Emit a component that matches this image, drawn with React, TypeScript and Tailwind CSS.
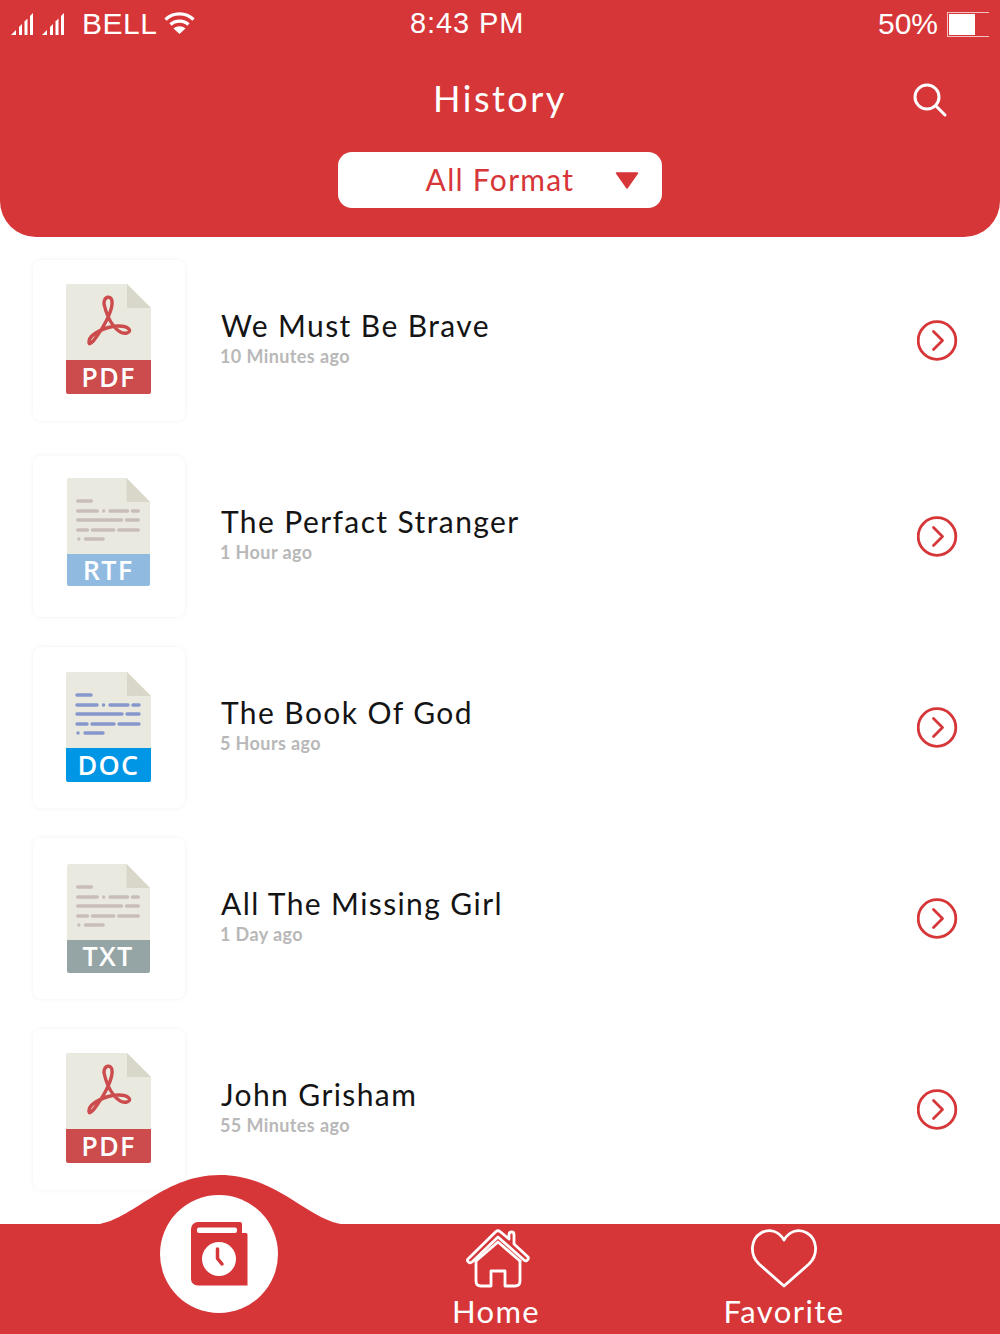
import React from "react";

const RED = "#d63638";

function DocIcon({ label, band, kind, lineColor, wide, lift, bandH }: { label: string; band: string; kind: "pdf" | "text"; lineColor?: string; wide?: boolean; lift: string; bandH: string }) {
  return (
    <div className={`flex flex-col ${wide ? "w-[85px] mr-[1px]" : "w-[83px] mr-[2px]"} ${lift}`}>
      <svg viewBox="0 0 85 76" className="block w-full" preserveAspectRatio="none" style={{ height: 76 }}>
        <path d="M2 0H61L85 24V76H0V2a2 2 0 0 1 2-2z" fill="#e9e9e0" />
        <path d="M61 0L85 24H61z" fill="#d9d7ca" />
        {kind === "pdf" ? (
          <path
            d="M38 20C38 12 45 11 46 17C47 24 41 38 31 52C27 58 22 63 23 57C24 50 40 42 53 42C62 42 67 47 61 49C52 51 42 38 38 20z"
            fill="none"
            stroke="#cc4b4c"
            strokeWidth="3.4"
            strokeLinejoin="round"
          />
        ) : (
          <g stroke={lineColor} strokeWidth="3.4" strokeLinecap="round" fill="none">
            <path d="M11 23H25" />
            <path d="M11 33H31M37.500 33H37.600M44 33H62M67 33H73" />
            <path d="M11 42H56M61 42H73" />
            <path d="M11 52H21M26 52H48M53 52H73" />
            <path d="M12 61H12.100M19 61H37" />
          </g>
        )}
      </svg>
      <div
        className={`flex items-center justify-center rounded-b-[2px] pt-[1px] text-[27px] font-semibold tracking-[1.2px] text-white ${bandH}`}
        style={{ backgroundColor: band, fontFamily: '"Open Sans", sans-serif' }}
      >
        {label}
      </div>
    </div>
  );
}

function Row({ title, sub, gap, doc }: { title: string; sub: string; gap: string; doc: React.ReactNode }) {
  return (
    <div className={`flex h-[161px] items-center pl-[33px] pr-[42px] ${gap}`}>
      <div className="flex h-[161px] w-[152px] shrink-0 items-center justify-center rounded-[8px] bg-white shadow-[0_0_5px_rgba(0,0,0,0.06)]">
        {doc}
      </div>
      <div className="ml-[36px] flex-1 pb-[6px]">
        <div className="text-[30px] leading-[34px] tracking-[1.4px] text-[#141414]">{title}</div>
        <div className="ml-[-1px] mt-[2px] text-[18px] font-bold leading-[24px] tracking-[0.4px] text-[#b8b8b8]">{sub}</div>
      </div>
      <svg width="41" height="41" viewBox="0 0 41 41" fill="none" stroke={RED} strokeWidth="2.800" strokeLinecap="round" strokeLinejoin="round">
        <circle cx="20" cy="20.500" r="18.800" />
        <path d="M16.500 11.500L25.500 20.500L16.500 29.500" />
      </svg>
    </div>
  );
}

function Signal() {
  return (
    <svg width="22" height="22" viewBox="0 0 22 22" fill="#fff">
      <path d="M0 22L5 17V22z" />
      <path d="M8 14L11 11V22H8z" />
      <path d="M13.500 8.500L16.500 5.500V22H13.500z" />
      <path d="M19 3L22 0V22H19z" />
    </svg>
  );
}

export default function App() {
  return (
    <div className="relative flex h-[1334px] w-[1000px] flex-col overflow-hidden bg-white" style={{ fontFamily: 'Lato, sans-serif' }}>
      <header className="h-[237px] shrink-0 rounded-b-[36px] bg-[#d63638] text-white">
        <div className="flex h-[48px] items-center px-[11px]" style={{ fontFamily: '"Liberation Sans", sans-serif' }}>
          <div className="flex w-[320px] items-center">
            <div className="flex gap-[9px]">
              <Signal />
              <Signal />
            </div>
            <span className="mb-[2px] ml-[18px] text-[30px] font-normal tracking-[0.5px]">BELL</span>
            <svg className="ml-[7px] mb-[3px]" width="31" height="24" viewBox="0 0 31 24" fill="none" stroke="#fff" strokeWidth="3.200">
              <path d="M1.500 8.500C9 1 22 1 29.500 8.500" />
              <path d="M6.500 13.500C11 9 20 9 24.500 13.500" />
              <path d="M15.500 23L9.500 17.500C13 14.500 18 14.500 21.500 17.500z" fill="#fff" stroke="none" />
            </svg>
          </div>
          <span className="ml-[79px] text-[29px] tracking-[0.9px]">8:43 PM</span>
          <div className="ml-auto flex items-center">
            <span className="mb-[2px] text-[30px]">50%</span>
            <div className="ml-[9px] flex h-[25px] w-[42px] border-y-[1.5px] border-l-[1.5px] border-white/70 py-[1px] pl-[1px]">
              <div className="h-full w-[26px] bg-white" />
            </div>
          </div>
        </div>
        <div className="relative flex h-[102px] items-center justify-center pb-[2px]">
          <h1 className="text-[36px] font-normal tracking-[2.500px]">History</h1>
          <svg className="absolute left-[912px] top-[34px]" width="36" height="36" viewBox="0 0 36 36" fill="none" stroke="#fff" strokeWidth="3" strokeLinecap="round">
            <circle cx="15" cy="15" r="12" />
            <path d="M24 24L33 33" />
          </svg>
        </div>
        <div className="mt-[2px] flex justify-center">
          <div className="relative flex h-[56px] w-[324px] items-center justify-center rounded-[14px] bg-white pb-[1px] text-[30px] tracking-[1.3px] text-[#d63638]">
            All Format
            <svg className="absolute left-[277px] top-[20px]" width="24" height="17" viewBox="0 0 24 17" fill={RED}>
              <path d="M1.500 1H22.500L12 16z" stroke={RED} strokeWidth="1.500" strokeLinejoin="round" />
            </svg>
          </div>
        </div>
      </header>

      <Row gap="mt-[23px]" title="We Must Be Brave" sub="10 Minutes ago" doc={<DocIcon wide lift="mb-[4px]" bandH="h-[34px]" label="PDF" band="#cc4b4c" kind="pdf" />} />
      <Row gap="mt-[35px]" title="The Perfact Stranger" sub="1 Hour ago" doc={<DocIcon lift="mb-[10px]" bandH="h-[32px]" label="RTF" band="#91bae1" kind="text" lineColor="#c8bdb8" />} />
      <Row gap="mt-[30px]" title="The Book Of God" sub="5 Hours ago" doc={<DocIcon wide lift="mb-[2px]" bandH="h-[34px]" label="DOC" band="#0096e6" kind="text" lineColor="#8697cb" />} />
      <Row gap="mt-[30px]" title="All The Missing Girl" sub="1 Day ago" doc={<DocIcon lift="mb-[1px]" bandH="h-[33px]" label="TXT" band="#95a5a5" kind="text" lineColor="#c8bdb8" />} />
      <Row gap="mt-[30px]" title="John Grisham" sub="55 Minutes ago" doc={<DocIcon wide lift="mb-[4px]" bandH="h-[34px]" label="PDF" band="#cc4b4c" kind="pdf" />} />

      <footer className="absolute bottom-0 left-0 flex h-[110px] w-[1000px] bg-[#d63638] text-white">
        <svg className="absolute left-[90px] top-[-49px]" width="260" height="50" viewBox="0 0 260 50" fill={RED}>
          <path d="M0 50C40 50 70 0 130 0C190 0 220 50 260 50z" />
        </svg>
        <div className="absolute left-[160px] top-[-29px] flex h-[118px] w-[118px] items-center justify-center rounded-full bg-white">
          <svg width="57" height="64" viewBox="0 0 57 64" fill={RED}>
            <path d="M7 0H49a2 2 0 0 1 2 2V11H55a1.500 1.500 0 0 1 1.500 1.500V63.500H7a6.500 6.500 0 0 1-7-6.500V7A7 7 0 0 1 7 0z" />
            <rect x="6" y="5.500" width="40" height="5.500" rx="2" fill="#fff" />
            <circle cx="28" cy="37" r="17" fill="#fff" />
            <path d="M26.500 27V36.500L31 42" fill="none" stroke={RED} strokeWidth="3.500" strokeLinecap="round" strokeLinejoin="round" />
          </svg>
        </div>
        <div className="absolute left-[410px] top-[4px] flex w-[170px] flex-col items-center">
          <svg className="ml-[6px]" width="64" height="60" viewBox="0 0 64 60" fill="none" stroke="#fff" strokeWidth="2.800" strokeLinecap="round" strokeLinejoin="round">
            <path d="M2 31L30 3.500Q32 2 34 3.500L43 11V6.500Q43 4 45.500 4Q48 4 48 6.500V16L62 29Q63 31 61 32.500Q59.500 33.500 58 32L32 9L6 34Q4 35.500 2.500 34Q0.500 32.500 2 31z" />
            <path d="M10 33V53Q10 58 15 58H25V43H39V58H49Q54 58 54 53V33" />
            <path d="M10 33L32 14L54 33" />
          </svg>
          <span className="mr-[-2px] mt-[5px] text-[31px] leading-[36px] tracking-[1.3px]">Home</span>
        </div>
        <div className="absolute left-[684px] top-[4px] flex w-[200px] flex-col items-center">
          <svg width="66" height="60" viewBox="0 0 66 60" fill="none" stroke="#fff" strokeWidth="2.800" strokeLinejoin="round">
            <path d="M33 58L8 36C-2 26 0 11 10 5C18 0 28 3 33 12C38 3 48 0 56 5C66 11 68 26 58 36z" />
          </svg>
          <span className="mt-[5px] text-[31px] leading-[36px] tracking-[1.4px]">Favorite</span>
        </div>
      </footer>
    </div>
  );
}
